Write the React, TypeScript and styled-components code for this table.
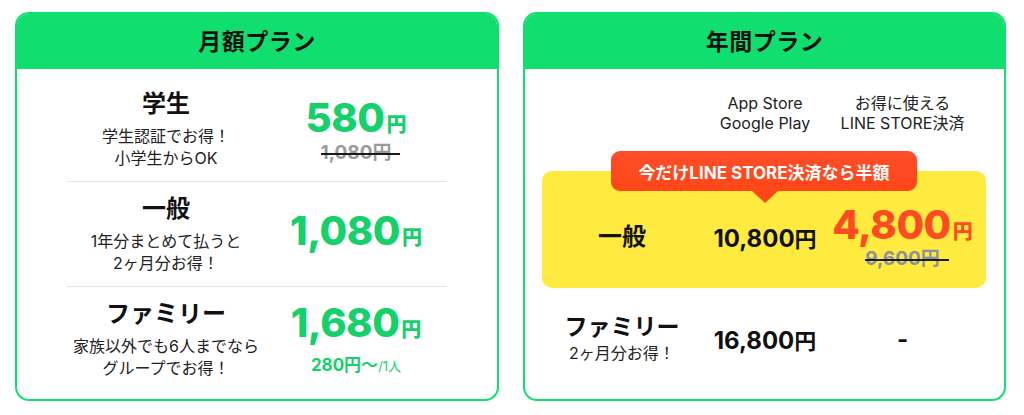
import React from 'react';
import styled, { createGlobalStyle } from 'styled-components';

const GREEN = '#10df6f';
const PRICE_GREEN = '#14d16b';
const ORANGE = '#ff4b22';
const FONT = `Inter, "Noto Sans CJK JP", "Noto Sans", sans-serif`;

const Global = createGlobalStyle`
    body {
        margin: 0;
        background: #fff;
        font-family: ${FONT};
        color: #1a1a1a;
    }
`;

const Page = styled.div`
    display: flex;
    gap: 24px;
    padding: 12px 0 0 15px;
    width: 1024px;
    box-sizing: border-box;
`;

const Card = styled.section<{ $width: number }>`
    width: ${(p) => p.$width}px;
    box-sizing: border-box;
    border: 2px solid ${GREEN};
    border-radius: 14px;
    overflow: hidden;
    display: flex;
    flex-direction: column;
`;

const CardHeader = styled.h2`
    margin: 0;
    height: 55px;
    padding-bottom: 4px;
    box-sizing: border-box;
    background: ${GREEN};
    display: flex;
    align-items: center;
    justify-content: center;
    font-size: 23px;
    font-weight: 700;
    color: #111;
    letter-spacing: 0.5px;
`;

const MonthlyBody = styled.div`
    padding: 8px 50px;
`;

const PlanRow = styled.div`
    display: grid;
    grid-template-columns: 198px 1fr;
    align-items: center;
    justify-items: center;
    padding: 12px 0;
    & + & {
        border-top: 1px solid #e4e4e4;
    }
`;

const PlanInfo = styled.div`
    text-align: center;
`;

const PlanTitle = styled.div<{ $size?: number; $lh?: number }>`
    font-size: ${(p) => p.$size ?? 24}px;
    font-weight: 700;
    line-height: ${(p) => p.$lh ?? 30}px;
    color: #111;
`;

const PlanNote = styled.div<{ $lh?: number; $gap?: number }>`
    margin-top: ${(p) => p.$gap ?? 6}px;
    font-size: 16px;
    line-height: ${(p) => p.$lh ?? 22}px;
    color: #222;
`;

const PriceBlock = styled.div`
    display: flex;
    flex-direction: column;
    align-items: center;
`;

const BigPrice = styled.div<{ $color: string; $lh?: number }>`
    font-size: 40px;
    font-weight: 800;
    line-height: ${(p) => p.$lh ?? 46}px;
    color: ${(p) => p.$color};
    letter-spacing: -0.5px;
    small {
        font-size: 20px;
        font-weight: 800;
        margin-left: 2px;
        letter-spacing: 0;
    }
`;

const Struck = styled.div<{ $color: string }>`
    position: relative;
    margin-top: -6px;
    font-size: 19px;
    font-weight: 700;
    line-height: 22px;
    color: ${(p) => p.$color};
    &::after {
        content: '';
        position: absolute;
        left: 0;
        right: -9px;
        top: 50%;
        height: 2px;
        background: #1a1a1a;
    }
`;

const PerPerson = styled.div`
    font-size: 17px;
    font-weight: 700;
    line-height: 24px;
    color: ${PRICE_GREEN};
    span {
        font-size: 13px;
        font-weight: 400;
    }
`;

const YearBody = styled.div`
    padding: 24px 18px 0 17px;
`;

const YearGrid = styled.div`
    display: grid;
    grid-template-columns: 160px 126px 149px;
    align-items: center;
    justify-items: center;
    text-align: center;
`;

const ColumnHead = styled.div`
    font-size: 16px;
    line-height: 20px;
    color: #222;
    white-space: nowrap;
`;

const Highlight = styled.div`
    position: relative;
    margin-top: 38px;
    height: 117px;
    box-sizing: border-box;
    padding-top: 32px;
    background: #ffeb3f;
    border-radius: 10px;
`;

const Badge = styled.div`
    position: absolute;
    top: -20px;
    left: 50%;
    transform: translateX(-50%);
    width: 306px;
    height: 40px;
    border-radius: 9px;
    background: linear-gradient(#ff4e2a, #ff4618);
    color: #fff;
    font-size: 17px;
    font-weight: 700;
    display: flex;
    align-items: center;
    justify-content: center;
    white-space: nowrap;
    &::after {
        content: '';
        position: absolute;
        bottom: -12px;
        left: 141px;
        border-left: 13px solid transparent;
        border-right: 13px solid transparent;
        border-top: 12px solid #ff4618;
    }
`;

const StorePrice = styled.div`
    font-size: 24px;
    font-weight: 700;
    color: #111;
    small {
        font-size: 22px;
        font-weight: 700;
    }
`;

const FamilyRow = styled(YearGrid)`
    padding-top: 25px;
`;

const App: React.FC = () => {
    return (
        <>
            <Global />
            <Page>
                <Card $width={484}>
                    <CardHeader>月額プラン</CardHeader>
                    <MonthlyBody>
                        <PlanRow>
                            <PlanInfo>
                                <PlanTitle>学生</PlanTitle>
                                <PlanNote>
                                    学生認証でお得！
                                    <br />
                                    小学生からOK
                                </PlanNote>
                            </PlanInfo>
                            <PriceBlock>
                                <BigPrice $color={PRICE_GREEN}>
                                    580<small>円</small>
                                </BigPrice>
                                <Struck $color="#9a9a9a">1,080円</Struck>
                            </PriceBlock>
                        </PlanRow>
                        <PlanRow>
                            <PlanInfo>
                                <PlanTitle>一般</PlanTitle>
                                <PlanNote>
                                    1年分まとめて払うと
                                    <br />
                                    2ヶ月分お得！
                                </PlanNote>
                            </PlanInfo>
                            <PriceBlock>
                                <BigPrice $color={PRICE_GREEN}>
                                    1,080<small>円</small>
                                </BigPrice>
                            </PriceBlock>
                        </PlanRow>
                        <PlanRow>
                            <PlanInfo>
                                <PlanTitle>ファミリー</PlanTitle>
                                <PlanNote>
                                    家族以外でも6人までなら
                                    <br />
                                    グループでお得！
                                </PlanNote>
                            </PlanInfo>
                            <PriceBlock>
                                <BigPrice $color={PRICE_GREEN}>
                                    1,680<small>円</small>
                                </BigPrice>
                                <PerPerson>
                                    280円〜<span>/1人</span>
                                </PerPerson>
                            </PriceBlock>
                        </PlanRow>
                    </MonthlyBody>
                </Card>

                <Card $width={483}>
                    <CardHeader>年間プラン</CardHeader>
                    <YearBody>
                        <YearGrid>
                            <span />
                            <ColumnHead>
                                App Store
                                <br />
                                Google Play
                            </ColumnHead>
                            <ColumnHead>
                                お得に使える
                                <br />
                                LINE STORE決済
                            </ColumnHead>
                        </YearGrid>

                        <Highlight>
                            <Badge>今だけLINE STORE決済なら半額</Badge>
                            <YearGrid>
                                <PlanTitle>一般</PlanTitle>
                                <StorePrice>
                                    10,800<small>円</small>
                                </StorePrice>
                                <PriceBlock>
                                    <BigPrice $color={ORANGE} $lh={44}>
                                        4,800<small>円</small>
                                    </BigPrice>
                                    <Struck $color="#8c929c">9,600円</Struck>
                                </PriceBlock>
                            </YearGrid>
                        </Highlight>

                        <FamilyRow>
                            <PlanInfo>
                                <PlanTitle $size={23} $lh={28}>
                                    ファミリー
                                </PlanTitle>
                                <PlanNote $lh={24} $gap={0}>
                                    2ヶ月分お得！
                                </PlanNote>
                            </PlanInfo>
                            <StorePrice>
                                16,800<small>円</small>
                            </StorePrice>
                            <StorePrice>-</StorePrice>
                        </FamilyRow>
                    </YearBody>
                </Card>
            </Page>
        </>
    );
};

export default App;
